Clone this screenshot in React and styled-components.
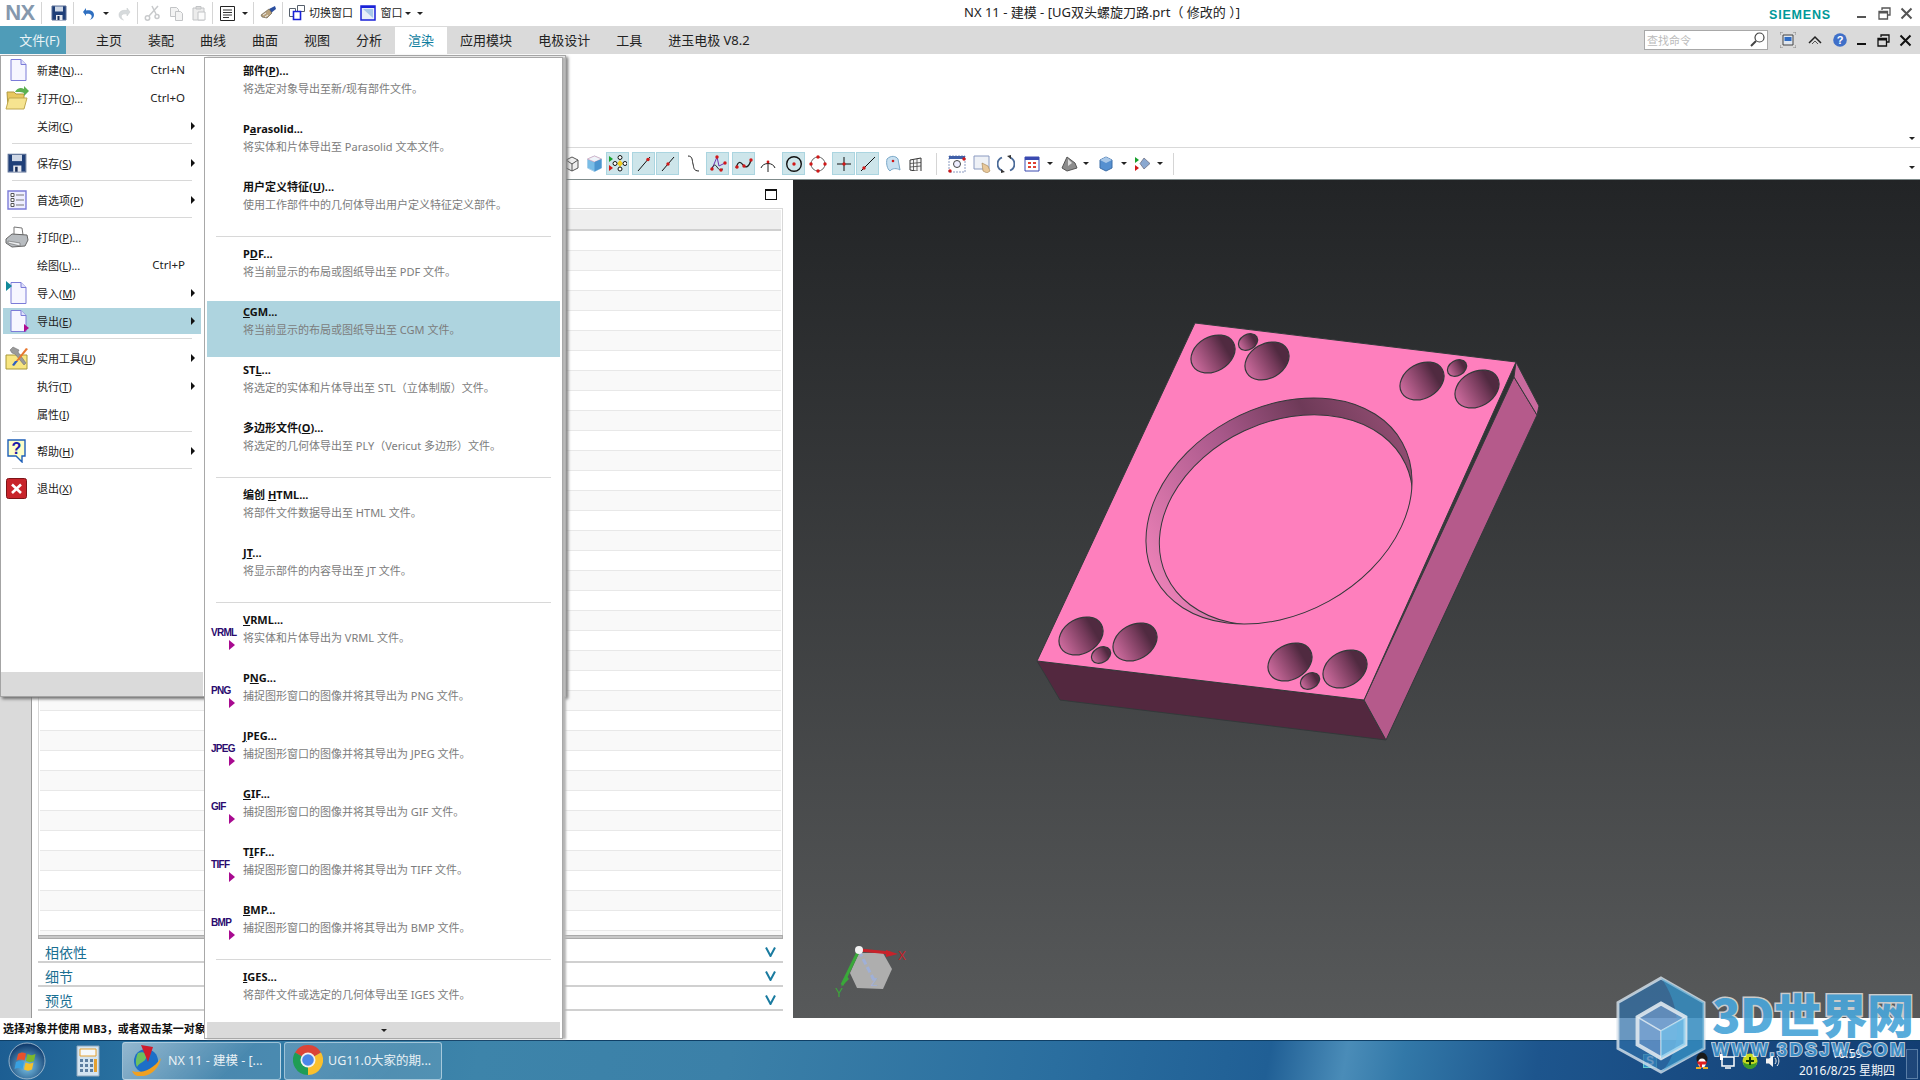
import React from 'react';
import styled, { createGlobalStyle } from 'styled-components';

const FONT = '"Noto Sans", "Noto Sans CJK SC", sans-serif';

const Global = createGlobalStyle`
  html, body { margin: 0; padding: 0; background: #fff; overflow: hidden; }
  * { box-sizing: border-box; }
  u { text-underline-offset: 1px; }
`;

const Screen = styled.div`
  position: relative; width: 1920px; height: 1080px; overflow: hidden;
  display: flex; flex-direction: column; font-family: ${FONT}; color: #222;
`;

/* generic row placing of drawn items by their centre line */
const Row = styled.div`display: flex; height: 100%; flex-shrink: 0;`;
const Slot = styled.div`
  width: ${p => p.$w}px; margin-left: ${p => p.$ml}px; flex-shrink: 0;
  display: flex; align-items: center; justify-content: center; white-space: nowrap;
`;
const Placed = ({ items, start = 0 }) => {
  let right = start;
  return (
    <Row>
      {items.map((it, i) => {
        const left = it.c - it.w / 2;
        const ml = left - right;
        right = left + it.w;
        return <Slot key={i} $w={it.w} $ml={ml}>{it.n}</Slot>;
      })}
    </Row>
  );
};

const Caret = styled.i`
  display: block; width: 0; height: 0;
  border-left: ${p => p.$s || 3.5}px solid transparent;
  border-right: ${p => p.$s || 3.5}px solid transparent;
  border-top: ${p => p.$s || 3.5}px solid #222;
`;
const VSep = styled.i`display: block; width: 1px; height: 22px; background: #d5d5d5;`;
const ArrowR = styled.i`
  display: block; width: 0; height: 0;
  border-top: 4px solid transparent; border-bottom: 4px solid transparent; border-left: 4px solid #111;
`;

const S = ({ w = 16, h, vb, children }) => (
  <svg width={w} height={h || w} viewBox={vb || `0 0 ${w} ${h || w}`} style={{ display: 'block', flexShrink: 0 }}>{children}</svg>
);

/* ---------- quick access icons ---------- */
const Floppy = ({ w = 16 }) => (
  <S w={w} vb="0 0 16 16">
    <path d="M1 1h14v14H1z" fill="#1f3f78" stroke="#5a6f96" />
    <path d="M4 1.500h8v5H4z" fill="#cfd8e6" />
    <path d="M5 10h6.500v5H5z" fill="#e7e9ee" /><path d="M6.500 11h2v4h-2z" fill="#152a55" />
  </S>
);
const Undo = () => (
  <S w={15}><path d="M2 6l3-4v2.500c5-.8 8 1 8 4.500 0 2.500-2 4.500-4.500 5 2-1.500 2.500-3 2-4.500-.7-1.500-3-2-5.500-1.500V10z" fill="#2f6fc0" /></S>
);
const Redo = () => (
  <S w={15}><path d="M13 6l-3-4v2.500c-5-.8-8 1-8 4.500 0 2.500 2 4.500 4.500 5-2-1.500-2.500-3-2-4.500.7-1.500 3-2 5.500-1.500V10z" fill="#d6dadc" stroke="#c4c8ca" strokeWidth=".5" /></S>
);
const Cut = () => (
  <S w={16}><g stroke="#c8cacc" fill="none" strokeWidth="1.500"><path d="M14 1L5 11M8 1l4 8" /><circle cx="3.500" cy="13" r="2.200" /><circle cx="13" cy="11.500" r="2" /></g></S>
);
const Copy = () => (
  <S w={15}><g fill="#f3f3f3" stroke="#c2c4c6"><path d="M1.500 1.500h6l2 2v7h-8z" /><path d="M6.500 5.500h5l2 2v7h-7z" /></g></S>
);
const Paste = () => (
  <S w={16}><g stroke="#c2c4c6"><path d="M2 3h11v12H2z" fill="#ececec" /><path d="M5 1.500h5V4H5z" fill="#ddd" /><path d="M7 7h7v8H7z" fill="#fbfbfb" /></g></S>
);
const DocLines = () => (
  <S w={15}><path d="M.5.5h14v14H.5z" fill="#fff" stroke="#222" /><path d="M3 4h9M3 6.500h9M3 9h9M3 11.500h6" stroke="#333" /></S>
);
const Brush = () => (
  <S w={18}><path d="M10 5l6-3 1 3-5 4z" fill="#2b4fa0" /><path d="M2 11l8-6 3 4-5 5-5-1z" fill="#b9a27c" stroke="#5b5444" strokeWidth=".6" /><path d="M4 11l3-2M6 13l3-2" stroke="#eee" /></S>
);
const SwitchWin = () => (
  <S w={16}><g fill="#fff" stroke="#56606c"><path d="M.5 3.500h6v8h-6z" /><path d="M8.500.5h7v6h-7z" /></g><path d="M4.500 6.500h7v8h-7z" fill="#fff" stroke="#1a22d8" strokeWidth="1.600" /></S>
);
const WinBlue = () => (
  <S w={16}><path d="M1 1h14v14H1z" fill="#e8eff8" stroke="#1a22d8" strokeWidth="1.500" /><path d="M1 1h14v2H1z" fill="#1a22d8" /><path d="M3 4h10v9z" fill="#a8c8e8" /></S>
);

/* ---------- title + menu bar ---------- */
const TitleBar = styled.div`height: 26px; display: flex; background: #fff; flex-shrink: 0;`;
const NxLogo = styled.span`font: bold 22px/26px "Liberation Sans", sans-serif; color: #8598ad; letter-spacing: -.5px;`;
const QuickText = styled.span`font-size: 11px; color: #222; margin-top: -2px;`;
const TitleText = styled.div`
  margin-left: 540px; font-size: 13px; line-height: 24px; color: #222; white-space: nowrap;
`;
const RightGroup = styled.div`margin-left: auto; width: ${p => p.$w}px; height: 100%; flex-shrink: 0;`;
const Siemens = styled.span`font: bold 12.500px "Liberation Sans", sans-serif; color: #009999; letter-spacing: .8px; margin-top: 3px;`;

const Minim = ({ c = '#555' }) => <S w={9} h={12}><path d="M0 9h9v2H0z" fill={c} /></S>;
const Restore = ({ c = '#555' }) => (
  <S w={13}><g fill="none" stroke={c} strokeWidth="1.300"><path d="M4 3V1h8v7h-2.500" /><path d="M1 4.500h8.500V12H1z" /><path d="M1 5.500h8.500" strokeWidth="2" /></g></S>
);
const CloseX = ({ c = '#555' }) => <S w={13}><path d="M1.500 1.500l10 10M11.500 1.500l-10 10" stroke={c} strokeWidth="2" /></S>;

const MenuBar = styled.div`height: 28px; background: #dadada; display: flex; flex-shrink: 0;`;
const FileTab = styled.div`
  width: 66px; background: #4f9cb8; color: #e9f3f6; font-size: 13px; padding: 0 0 2px 13px;
  display: flex; align-items: center; justify-content: center;
`;
const Tabs = styled.div`display: flex; margin-left: 17px; padding-top: 1px;`;
const Tab = styled.div`
  padding: 0 13px 2px; font-size: 13px; display: flex; align-items: center; white-space: nowrap;
  color: ${p => (p.$on ? '#0f7ea0' : '#222')}; background: ${p => (p.$on ? '#fff' : 'transparent')};
`;
const SearchBox = styled.div`
  width: 124px; height: 20px; background: #fff; border: 1px solid #a8a8a8; padding: 0 2px 1px;
  display: flex; align-items: center; justify-content: space-between; font-size: 11px; color: #bbb;
`;

const Ribbon = styled.div`
  height: 94px; background: #fff; border-bottom: 1px solid #d9d9d9; flex-shrink: 0;
  display: flex; justify-content: flex-end; align-items: flex-end; padding: 0 5px 7px 0;
`;
const ToolBar = styled.div`
  height: 32px; background: #fff; border-bottom: 1px solid #7f8b8b; flex-shrink: 0; display: flex;
`;
const ToolBtn = styled.div`
  width: 23px; height: 23px; display: flex; align-items: center; justify-content: center;
  background: ${p => (p.$on ? '#cde5ea' : 'transparent')};
  border: 1px solid ${p => (p.$on ? '#abd5e0' : 'transparent')};
`;
const ToolEnd = styled.div`margin-left: auto; padding: 18px 5px 0 0;`;

/* toolbar drawings */
const R = ({ x, y, r = 1.700 }) => <circle cx={x} cy={y} r={r} fill="#d01818" />;
const TB = {
  gray: <S w={16}><path d="M8 1l6 3v8l-6 3-6-3V4z" fill="#eee" stroke="#555" /><path d="M8 8l6-4M8 8v7M8 8L2 4" stroke="#555" fill="none" /></S>,
  blue: <S w={17}><path d="M8.500 1l7 3v9l-7 3.500-7-3.500V4z" fill="#79bde6" stroke="#a9d0ea" /><path d="M1.500 4l7 3 7-3-7-3z" fill="#eef4fa" stroke="#e08aa0" strokeWidth=".5" /><path d="M8.500 7v9.500l7-3.500V4z" fill="#4c96cf" /></S>,
  dots: <S w={19}><path d="M1 2l4 3-4 3z" fill="#17a02c" /><path d="M1 11l4 3-4 3z" fill="#d01818" /><path d="M12 6l3 3.500-3 3.500-3-3.500z" fill="#f2cf20" /><g fill="#fff" stroke="#111"><circle cx="12" cy="3.500" r="2" /><circle cx="12" cy="15" r="2" /><circle cx="7" cy="9.500" r="2" /><circle cx="17" cy="9.500" r="2" /></g></S>,
  line1: <S w={18}><path d="M3 16L15 2" stroke="#111" /><R x="13" y="4.500" /></S>,
  line2: <S w={18}><path d="M3 16L15 2" stroke="#111" /><R x="9" y="9" /></S>,
  curve: <S w={17}><path d="M3 1c5 0 4 5 5 8s0 7 6 7" stroke="#222" fill="none" /></S>,
  poly: <S w={20}><path d="M4 15L9 3l2 9 6-3" stroke="#7030b0" fill="none" /><path d="M3 16c3-6 4-6 6-3s3 3 6 2" stroke="#222" fill="none" /><R x="9" y="3" /><R x="4" y="15" /><R x="13" y="16" /><R x="17" y="9" /></S>,
  wave: <S w={20}><path d="M2 14c3-10 6-4 8-2s5 1 7-6" stroke="#222" fill="none" strokeWidth="1.300" /><R x="3" y="13" /><R x="10" y="12" /><R x="17" y="6" /></S>,
  arc: <S w={16}><path d="M1 12c2-6 12-6 14 0M8 6v10" stroke="#222" fill="none" /><R x="8" y="6" r="1.400" /></S>,
  circ: <S w={18}><circle cx="9" cy="9" r="7.300" fill="none" stroke="#111" strokeWidth="1.400" /><R x="9" y="9" /></S>,
  circ4: <S w={18}><circle cx="9" cy="9" r="7" fill="none" stroke="#666" /><R x="9" y="2" /><R x="2" y="9" /><R x="16" y="9" /><R x="9" y="16" /></S>,
  cross: <S w={18}><path d="M9 2v14M2 9h14" stroke="#111" /><R x="9" y="9" /></S>,
  line3: <S w={18}><path d="M2 16L16 2" stroke="#111" /><R x="5" y="13" /></S>,
  page: <S w={18}><path d="M3 4c4-4 9-3 11 0l2 11c-3-2-8-2-10 1-3-2-4-8-3-12z" fill="#c8e0f0" stroke="#7aa8c8" /><R x="9" y="6" r="1.300" /></S>,
  grid: <S w={14}><path d="M1 3l11-2v14L1 13z" fill="#f5f5f5" stroke="#333" /><path d="M1 6.500l11-1M1 10l11-1M4.500 2.500v11.500M8 2v12.500" stroke="#444" strokeWidth=".8" /></S>,
  fit: <S w={18}><path d="M1 1h16v16H1z" fill="#fff" stroke="#8a9ac0" strokeDasharray="2 1" /><path d="M1 1h16v3H1z" fill="#4060a8" /><circle cx="9" cy="9" r="3.500" fill="#eef" stroke="#444" /><R x="2" y="16" /><R x="16" y="4" /></S>,
  pan: <S w={18}><path d="M1 1h15v13H1z" fill="#eef1f6" stroke="#8a9ac0" /><path d="M9 8l6 3 2 5-3 2-4-2z" fill="#e8c89a" stroke="#a08050" strokeWidth=".6" /></S>,
  spin: <S w={18}><path d="M13 2.500a7 7 0 0 1 0 13M5 15.500a7 7 0 0 1 0-13" fill="none" stroke="#4a6a98" strokeWidth="1.800" /><path d="M10 1l4-1v4zM8 17l-4 1v-4z" fill="#333" /></S>,
  frame: <S w={16}><path d="M1 1h14v14H1z" fill="#fff" stroke="#3a4ab0" /><path d="M1 1h14v3H1z" fill="#3a4ab0" /><g fill="#e04030"><path d="M4 6h3v2H4zM9 6h3v2H9zM4 10h3v2H4zM9 10h3v2H9z" /></g></S>,
  shade: <S w={17}><path d="M6 2l8 6 2 5-10 3-5-3z" fill="#8c8c8c" stroke="#555" /><path d="M7 4l4 4-4 3z" fill="#ddd" /></S>,
  box: <S w={16}><path d="M8 1l6 3v8l-6 3-6-3V4z" fill="#5590d0" stroke="#3c6ea8" /><path d="M2 4l6 3 6-3-6-3z" fill="#a9c8e8" /></S>,
  view: <S w={17}><path d="M1 2l4 3-4 3z" fill="#17a02c" /><path d="M1 10l4 3-4 3z" fill="#d01818" /><path d="M10 3l6 5.500-6 5.500-4-5.500z" fill="#8aa8d0" stroke="#556" strokeWidth=".6" /></S>,
};

/* ---------- left panel ---------- */
const Workspace = styled.div`height: 838px; display: flex; flex-shrink: 0;`;
const Panel = styled.div`width: 793px; display: flex; background: #fff; flex-shrink: 0;`;
const Gutter = styled.div`width: 32px; background: #dadada; border-right: 1px solid #999;`;
const PanelBody = styled.div`flex: 1; display: flex; flex-direction: column; padding: 0 10px 6px 6px;`;
const PanelHead = styled.div`height: 28px; display: flex; justify-content: flex-end; align-items: center; padding-right: 6px;`;
const MaxBtn = styled.i`display: block; width: 12px; height: 11px; border: 1px solid #111; border-top-width: 2px;`;
const List = styled.div`
  height: 727px; overflow: hidden; border: 1px solid #d8d8d8; border-bottom: none; padding: 1px 1px 0;
`;
const ListHead = styled.div`height: 21px; background: #efefef; border-bottom: 2px solid #d0d0d0;`;
const ListRow = styled.div`
  height: 20px; border-bottom: 1px solid #e8e8e8;
  background: ${p => (p.$alt ? '#f9f9f9' : '#fff')};
`;
const ListEnd = styled.div`height: 4px; background: #c8c8c8; border: 1px solid #aaa;`;
const Section = styled.div`
  height: 24px; border-bottom: 2px solid #d0d0d0; padding: 3px 7px 0;
  display: flex; align-items: center; justify-content: space-between;
  font-size: 14px; color: #1a6f92;
`;
const Chev = () => <S w={11} h={10}><path d="M1 .5L5.500 9 10 .5" stroke="#1a7ba0" strokeWidth="2" fill="none" /></S>;

const Viewport = styled.div`
  flex: 1; background: linear-gradient(#222426, #57595a);
`;

/* ---------- status and taskbar ---------- */
const StatusBar = styled.div`
  height: 22px; background: #fff; font-size: 11px; font-weight: 700; color: #111;
  display: flex; align-items: center; padding: 0 0 2px 3px; white-space: nowrap; flex-shrink: 0;
`;
const Taskbar = styled.div`
  height: 40px; flex-shrink: 0; border-top: 1px solid #0f3f66;
  background: linear-gradient(100deg, #1c5d92 0, #2b74a2 8%, #3d84aa 25%, #3b80a8 38%, #2a6e9f 55%, #205f95 66%, #4a8cb8 70%, #3278a8 73%, #1d558d 80%, #123d72 100%);
`;
const TaskBtn = styled.div`
  width: 100%; height: 38px; border: 1px solid rgba(225, 240, 248, .55); border-radius: 3px;
  background: linear-gradient(135deg, ${p => (p.$hi ? 'rgba(255,255,255,.5)' : 'rgba(255,255,255,.2)')}, rgba(255,255,255,.12) 70%);
  display: flex; align-items: center; gap: 5px; padding: 0 0 2px 8px;
  color: #e9f1f5; font-size: 12.500px;
`;
const Clock = styled.div`
  display: flex; flex-direction: column; align-items: center; color: #f2f6fa; font-size: 12px; line-height: 17px;
  padding-top: 3px;
`;
const ShowDesk = styled.i`
  display: block; width: 100%; height: 30px; margin-top: 6px;
  border: 1px solid rgba(180, 210, 235, .4); background: rgba(255, 255, 255, .05);
`;
const Sogou = styled.span`
  font: bold 12px "Liberation Sans", sans-serif; color: #fff; background: #2a8fc8;
  border: 1px solid #6cc; width: 14px; height: 14px; display: flex; align-items: center; justify-content: center;
`;

const Orb = () => (
  <S w={38} vb="0 0 38 38">
    <defs><radialGradient id="orb" cx=".5" cy=".65" r=".6"><stop offset="0" stopColor="#7cc6ea" /><stop offset="1" stopColor="#123e70" /></radialGradient></defs>
    <circle cx="19" cy="19" r="18" fill="url(#orb)" stroke="#c8d8e4" strokeOpacity=".7" />
    <path d="M10 12c3-2 5-2 8-.5l-1.500 7c-3-1.500-5-1.500-8 0z" fill="#e8512c" />
    <path d="M19.500 12c3 1.500 5 1.500 8 0l-1.500 7c-3 1.500-5 1.500-8 0z" fill="#7cb82c" />
    <path d="M8 20c3-1.500 5-1.500 8 0l-1.500 7c-3-1.500-5-1.500-8 0z" fill="#38a0e0" />
    <path d="M17.500 20.500c3 1.500 5 1.500 8 0L24 27.500c-3 1.500-5 1.500-8 0z" fill="#f6c02c" />
  </S>
);
const Calc = () => (
  <S w={24} h={32} vb="0 0 24 32">
    <path d="M1 1h22v30H1z" fill="#d4e4f0" stroke="#8ea8bc" />
    <path d="M4 4h16v7H4z" fill="#f4f8fb" stroke="#e4a030" />
    <g fill="#5c7ea0"><path d="M4 14h3v3H4zM9 14h3v3H9zM14 14h3v3h-3zM4 19h3v3H4zM9 19h3v3H9zM14 19h3v3h-3zM4 24h3v3H4zM9 24h3v3H9zM14 24h3v3h-3z" /></g>
    <path d="M18 14h3v13h-3z" fill="#e4a030" />
  </S>
);
const NxApp = () => (
  <S w={32} h={32} vb="0 0 32 32">
    <circle cx="15" cy="17" r="12" fill="#1d6fc8" />
    <path d="M7 9c6-2 9 1 8 5s-6 4-9 9c-2-4-1-10 1-14z" fill="#6cc060" />
    <path d="M10 1l12 2-5 15z" fill="#d01c2c" />
    <path d="M1 27c8 3 20 0 29-13-2 12-13 20-24 18-2-.5-4-2.500-5-5z" fill="#f0a020" />
  </S>
);
const Chrome = () => (
  <S w={30}>
    <path d="M15 15L2 7.500A15 15 0 0 1 28 7.500z" fill="#db4437" />
    <path d="M15 15l13-7.500A15 15 0 0 1 15 30z" fill="#fbc02d" />
    <path d="M15 15V30A15 15 0 0 1 2 7.500z" fill="#1f9d55" />
    <circle cx="15" cy="15" r="7.500" fill="#f2f2f2" /><circle cx="15" cy="15" r="5.800" fill="#4a86e8" />
  </S>
);
const QQ = () => (
  <S w={16} h={18} vb="0 0 16 18">
    <ellipse cx="8" cy="7" rx="5.500" ry="6.500" fill="#1a1a1a" /><ellipse cx="8" cy="11" rx="4" ry="4.500" fill="#fff" />
    <path d="M3 9.500h10l-1 3H8v3H5.500v-3H4z" fill="#e02020" /><path d="M2 15h5v2H2zM9 15h5v2H9z" fill="#f0b020" />
  </S>
);
const Net = () => (
  <S w={16}><path d="M3 4h12v9H3zM6 15h6" fill="none" stroke="#fff" strokeWidth="1.500" /><path d="M1 1h3v6H1z" fill="#fff" /></S>
);
const Three60 = () => (
  <S w={16}><circle cx="8" cy="8" r="7.500" fill="#c8d820" /><path d="M1 9a7 7 0 0 0 14 0c-3 3-10 3-14 0z" fill="#3c9c28" /><path d="M7 4h2v3h3v2H9v3H7V9H4V7h3z" fill="#103808" /></S>
);
const Vol = () => (
  <S w={16}><path d="M1 5.500h3L8 2v12L4 10.500H1z" fill="#f4f4f4" /><path d="M10 5c1.500 2 1.500 4 0 6M12 3c2.500 3 2.500 7 0 10" stroke="#eee" fill="none" /></S>
);

/* ---------- menus ---------- */
const MainMenu = styled.div`
  position: absolute; left: 0; top: 55px; width: 566px; height: 642px; z-index: 5;
  background: #fff; border: 1px solid #a4a4a4; box-shadow: 2px 2px 3px #6f6f6f;
  display: flex;
`;
const MainCol = styled.div`
  width: 202px; display: flex; flex-direction: column; height: 100%;
`;
const MainItems = styled.div`flex: 1; padding: 0 2px;`;
const MainFoot = styled.div`height: 24px; background: #dadada;`;
const Item = styled.div`
  height: 28px; display: flex; align-items: center; font-size: 11px; color: #222;
  background: ${p => (p.$on ? 'linear-gradient(transparent 1px, #aed4df 1px, #aed4df 27px, transparent 27px)' : 'transparent')};
`;
const ItemIcon = styled.div`width: 34px; flex-shrink: 0; display: flex; justify-content: center; padding-right: 7px;`;
const ItemLabel = styled.div`flex: 1; white-space: nowrap; margin-top: -1px;`;
const Shortcut = styled.div`font-size: 11.500px; margin-top: -1px;`;
const ItemArrow = styled.div`width: 16px; flex-shrink: 0; display: flex; justify-content: center;`;
const MenuSep = styled.div`height: 1px; margin: 3px 9px 5px; background: #d8d8d8;`;

const SubMenu = styled.div`
  position: absolute; left: 204px; top: 57px; width: 359px; height: 982px; z-index: 6;
  background: #fff; border: 1px solid #a8a8a8; box-shadow: 3px 0 2px #b4b4b4;
  display: flex; flex-direction: column; padding: 0 2px;
`;
const SubItem = styled.div`
  height: 58px; display: grid; grid-template-columns: 36px 1fr; flex-shrink: 0;
  background: ${p => (p.$on ? 'linear-gradient(transparent 2px, #aed4df 2px)' : 'transparent')};
`;
const SubIcon = styled.div`
  display: flex; flex-direction: column; align-items: flex-start; padding: 19px 0 0 4px;
`;
const SubFmt = styled.span`
  font: 700 10px/13px "Liberation Sans", sans-serif; color: #2a0a6e; letter-spacing: -.7px;
`;
const SubTri = styled.i`
  display: block; margin: 1px 0 0 18px; width: 0; height: 0;
  border-top: 5.500px solid transparent; border-bottom: 5.500px solid transparent; border-left: 6px solid #a80a90;
`;
const SubText = styled.div`padding-top: 6px;`;
const SubTitle = styled.div`font-size: 11px; line-height: 14px; font-weight: 700; color: #111; white-space: nowrap;`;
const SubDesc = styled.div`font-size: 11px; line-height: 14px; margin-top: 4px; color: #7c7c7c; white-space: nowrap;`;
const SubSep = styled.div`height: 1px; margin: 4px 9px 4px; background: #d8d8d8; flex-shrink: 0;`;
const SubFoot = styled.div`
  margin-top: auto; margin-bottom: 1px; height: 16px; background: #dadada; flex-shrink: 0;
  display: flex; align-items: center; justify-content: center;
`;

const Page = ({ badge }) => (
  <S w={24} vb="0 0 24 24">
    <path d="M6 1.500h10l5 5v16H6z" fill="#f6f6ff" stroke="#7c7cd8" />
    <path d="M16 1.500v5h5" fill="#dfe0fa" stroke="#7c7cd8" />
    {badge === 'in' && <path d="M1 0l6 5-6 5z" fill="#128a9a" />}
    {badge === 'out' && <path d="M19 15l5 4-5 4z" fill="#b00a90" />}
  </S>
);
const Folder = () => (
  <S w={24} vb="0 0 24 24">
    <path d="M2 6h7l2 2h8v14H3z" fill="#e8c860" stroke="#b09a40" />
    <path d="M1 23l3-11h18l-3 11z" fill="#f6e490" stroke="#c0a850" />
    <path d="M10 6c2-4 6-5 9-3V0l5 5-5 5V7c-3-1.500-6-1-9-1z" fill="#5cb050" />
  </S>
);
const ListIco = () => (
  <S w={20} vb="0 0 20 20">
    <path d="M1 1h18v18H1z" fill="#eef" stroke="#7c7cd8" strokeWidth="1.400" />
    <g fill="#fff" stroke="#555"><path d="M4 3.500h3v3H4zM4 8.500h3v3H4zM4 13.500h3v3H4z" /></g>
    <path d="M9 5h8M9 10h8M9 15h8" stroke="#777" />
  </S>
);
const Printer = () => (
  <S w={24} vb="0 0 24 24">
    <path d="M9 10V2l8 1 1 7z" fill="#fff" stroke="#777" />
    <path d="M1 14l6-5 15 1 1 5-3 6-13 1-6-4z" fill="#b8bcc0" stroke="#666" />
    <path d="M3 16l12 2v3L3 18z" fill="#eceef0" stroke="#666" strokeWidth=".6" />
  </S>
);
const ToolsIco = () => (
  <S w={24} vb="0 0 24 24">
    <path d="M1 9h21v14H1z" fill="#f8e680" stroke="#a89838" />
    <path d="M8 1l6 3-1 2 8 11-2 2L10 8 7 7 5 4z" fill="#9a9a9a" stroke="#666" strokeWidth=".5" />
    <path d="M21 2l2 1-10 12-3 1z" fill="#e87830" />
    <path d="M13 15l-4 5-2-1 3-4z" fill="#3060c0" />
  </S>
);
const HelpIco = () => (
  <S w={20} h={24} vb="0 0 20 24">
    <path d="M1 1h17v16h-3v6l-6-6H1z" fill="#fdfdc8" stroke="#1e5fb8" strokeWidth="1.400" />
    <text x="9.500" y="14.500" textAnchor="middle" fontFamily="Liberation Sans" fontWeight="700" fontSize="16" fill="#1a1aa8">?</text>
  </S>
);
const ExitIco = () => (
  <S w={21} vb="0 0 21 21">
    <rect x=".5" y=".5" width="20" height="20" rx="2" fill="#c8242a" stroke="#7c1418" />
    <path d="M6 6.500l9 8.500M15 6.500L6 15" stroke="#fff" strokeWidth="2.600" />
  </S>
);

const mainMenu = [
  { l: '新建', k: 'N', d: '...', s: 'Ctrl+N', i: <Page /> },
  { l: '打开', k: 'O', d: '...', s: 'Ctrl+O', i: <Folder /> },
  { l: '关闭', k: 'C', a: 1 },
  { sep: 1 },
  { l: '保存', k: 'S', a: 1, i: <Floppy w={20} /> },
  { sep: 1 },
  { l: '首选项', k: 'P', a: 1, i: <ListIco /> },
  { sep: 1 },
  { l: '打印', k: 'P', d: '...', i: <Printer /> },
  { l: '绘图', k: 'L', d: '...', s: 'Ctrl+P' },
  { l: '导入', k: 'M', a: 1, i: <Page badge="in" /> },
  { l: '导出', k: 'E', a: 1, on: 1, i: <Page badge="out" /> },
  { sep: 1 },
  { l: '实用工具', k: 'U', a: 1, i: <ToolsIco /> },
  { l: '执行', k: 'T', a: 1 },
  { l: '属性', k: 'I' },
  { sep: 1 },
  { l: '帮助', k: 'H', a: 1, i: <HelpIco /> },
  { sep: 1 },
  { l: '退出', k: 'X', i: <ExitIco /> },
];

const subMenu = [
  { t: <>部件(<u>P</u>)...</>, d: '将选定对象导出至新/现有部件文件。' },
  { t: <>P<u>a</u>rasolid...</>, d: '将实体和片体导出至 Parasolid 文本文件。' },
  { t: <>用户定义特征(<u>U</u>)...</>, d: '使用工作部件中的几何体导出用户定义特征定义部件。' },
  { sep: 1 },
  { t: <>P<u>D</u>F...</>, d: '将当前显示的布局或图纸导出至 PDF 文件。' },
  { t: <><u>C</u>GM...</>, d: '将当前显示的布局或图纸导出至 CGM 文件。', on: 1 },
  { t: <>ST<u>L</u>...</>, d: '将选定的实体和片体导出至 STL（立体制版）文件。' },
  { t: <>多边形文件(<u>O</u>)...</>, d: '将选定的几何体导出至 PLY（Vericut 多边形）文件。' },
  { sep: 1 },
  { t: <>编创 <u>H</u>TML...</>, d: '将部件文件数据导出至 HTML 文件。' },
  { t: <>J<u>T</u>...</>, d: '将显示部件的内容导出至 JT 文件。' },
  { sep: 1 },
  { t: <><u>V</u>RML...</>, d: '将实体和片体导出为 VRML 文件。', f: 'VRML' },
  { t: <>P<u>N</u>G...</>, d: '捕捉图形窗口的图像并将其导出为 PNG 文件。', f: 'PNG' },
  { t: <><u>J</u>PEG...</>, d: '捕捉图形窗口的图像并将其导出为 JPEG 文件。', f: 'JPEG' },
  { t: <><u>G</u>IF...</>, d: '捕捉图形窗口的图像并将其导出为 GIF 文件。', f: 'GIF' },
  { t: <>T<u>I</u>FF...</>, d: '捕捉图形窗口的图像并将其导出为 TIFF 文件。', f: 'TIFF' },
  { t: <><u>B</u>MP...</>, d: '捕捉图形窗口的图像并将其导出为 BMP 文件。', f: 'BMP' },
  { sep: 1 },
  { t: <><u>I</u>GES...</>, d: '将部件文件或选定的几何体导出至 IGES 文件。' },
];

const quick = [
  { c: 20, w: 34, n: <NxLogo>NX</NxLogo> },
  { c: 41, w: 1, n: <VSep /> },
  { c: 59, w: 16, n: <Floppy /> },
  { c: 73, w: 1, n: <VSep /> },
  { c: 88, w: 15, n: <Undo /> },
  { c: 106, w: 8, n: <Caret /> },
  { c: 124, w: 15, n: <Redo /> },
  { c: 137, w: 1, n: <VSep /> },
  { c: 152, w: 16, n: <Cut /> },
  { c: 176, w: 15, n: <Copy /> },
  { c: 199, w: 16, n: <Paste /> },
  { c: 212, w: 1, n: <VSep /> },
  { c: 227, w: 15, n: <DocLines /> },
  { c: 245, w: 8, n: <Caret /> },
  { c: 253, w: 1, n: <VSep /> },
  { c: 268, w: 18, n: <Brush /> },
  { c: 282, w: 1, n: <VSep /> },
  { c: 297, w: 16, n: <SwitchWin /> },
  { c: 331, w: 44, n: <QuickText>切换窗口</QuickText> },
  { c: 367.500, w: 16, n: <WinBlue /> },
  { c: 391.500, w: 24, n: <QuickText>窗口</QuickText> },
  { c: 408, w: 8, n: <Caret /> },
  { c: 420, w: 8, n: <Caret /> },
];

const tb = (c, k, on) => ({ c, w: 23, n: <ToolBtn $on={on}>{TB[k]}</ToolBtn> });
const tools = [
  tb(572, 'gray'), tb(594, 'blue'), tb(617.500, 'dots', 1), tb(643.500, 'line1', 1), tb(667.500, 'line2', 1),
  tb(693, 'curve'), tb(717.500, 'poly', 1), tb(743.500, 'wave', 1), tb(767.500, 'arc'), tb(793.500, 'circ', 1),
  tb(817.500, 'circ4'), tb(843.500, 'cross', 1), tb(867.500, 'line3', 1), tb(892.500, 'page'), tb(916, 'grid'),
  { c: 936, w: 1, n: <VSep /> },
  tb(956.500, 'fit'), tb(981.500, 'pan'), tb(1005.500, 'spin'), tb(1032, 'frame'),
  { c: 1050, w: 7, n: <Caret /> }, tb(1069, 'shade'),
  { c: 1086, w: 7, n: <Caret /> }, tb(1106, 'box'),
  { c: 1124, w: 7, n: <Caret /> }, tb(1142, 'view'),
  { c: 1160, w: 7, n: <Caret /> },
  { c: 1173, w: 1, n: <VSep /> },
];

const Mag = () => (
  <S w={15}><circle cx="9.500" cy="5.500" r="4.500" fill="#fff" stroke="#444" strokeWidth="1.200" /><path d="M6 9l-5 5" stroke="#444" strokeWidth="2" /></S>
);
const WinFrame = () => (
  <S w={16}><path d="M0 3V0h3M13 0h3v3M16 13v3h-3M3 16H0v-3" stroke="#888" fill="none" /><path d="M3 3h10v10H3z" fill="#dfe6ef" stroke="#444" /><path d="M4.500 5h7v4h-7z" fill="#2f6cc4" /></S>
);
const UpChev = () => <S w={14} h={10}><path d="M1 8l6-6 6 6" fill="none" stroke="#222" strokeWidth="1.500" /><path d="M4 9l3-3 3 3" fill="none" stroke="#555" /></S>;
const HelpBlue = () => (
  <S w={14}><circle cx="7" cy="7" r="6.800" fill="#3f6fc8" /><text x="7" y="11" textAnchor="middle" fontFamily="Liberation Sans" fontWeight="700" fontSize="11" fill="#fff">?</text></S>
);

const titleRight = [
  { c: 1800, w: 64, n: <Siemens>SIEMENS</Siemens> },
  { c: 1861, w: 9, n: <Minim /> },
  { c: 1884, w: 13, n: <Restore /> },
  { c: 1906, w: 13, n: <CloseX /> },
];
const menuRight = [
  { c: 1706, w: 124, n: <SearchBox>查找命令<Mag /></SearchBox> },
  { c: 1788, w: 16, n: <WinFrame /> },
  { c: 1814.500, w: 14, n: <UpChev /> },
  { c: 1840, w: 14, n: <HelpBlue /> },
  { c: 1861, w: 9, n: <Minim c="#111" /> },
  { c: 1883, w: 13, n: <Restore c="#111" /> },
  { c: 1905, w: 13, n: <CloseX c="#111" /> },
];
const task = [
  { c: 27, w: 40, n: <Orb /> },
  { c: 88, w: 24, n: <Calc /> },
  { c: 201.500, w: 159, n: <TaskBtn $hi><NxApp />NX 11 - 建模 - [...</TaskBtn> },
  { c: 363, w: 158, n: <TaskBtn><Chrome />UG11.0大家的期...</TaskBtn> },
  { c: 1650, w: 14, n: <Sogou>S</Sogou> },
  { c: 1702, w: 16, n: <QQ /> },
  { c: 1727, w: 16, n: <Net /> },
  { c: 1750, w: 16, n: <Three60 /> },
  { c: 1773, w: 16, n: <Vol /> },
  { c: 1847, w: 110, n: <Clock><span>16:59</span><span>2016/8/25 星期四</span></Clock> },
  { c: 1912, w: 12, n: <ShowDesk /> },
];

/* ---------- 3D part ---------- */
const HOLES = [
  [1213, 354, 1], [1267, 361, 1], [1248, 342, 0],
  [1422, 381, 1], [1477, 389, 1], [1457, 368, 0],
  [1081, 636, 1], [1135, 642, 1], [1101, 655, 0],
  [1290, 662, 1], [1345, 669, 1], [1310, 681, 0],
];
const EDGE = '#33393a';
const Part = () => (
  <svg width="1127" height="838" viewBox="793 180 1127 838" style={{ display: 'block' }}>
    <defs>
      <linearGradient id="hole" x1="0" y1="0" x2="1" y2="0">
        <stop offset="0" stopColor="#cf6c9f" /><stop offset=".6" stopColor="#743a5a" /><stop offset=".8" stopColor="#502a40" /><stop offset="1" stopColor="#502a40" />
      </linearGradient>
      <linearGradient id="wall" x1="0" y1="0" x2="1" y2="0">
        <stop offset="0" stopColor="#ea80b6" /><stop offset=".45" stopColor="#a8588a" /><stop offset=".75" stopColor="#6e3a58" /><stop offset="1" stopColor="#8f4c70" />
      </linearGradient>
      <clipPath id="pocket"><ellipse cx="1279" cy="511" rx="141" ry="103" transform="rotate(-29 1279 511)" /></clipPath>
    </defs>
    <polygon points="1037,661 1364,700 1386,740 1060,700" fill="#53283f" stroke={EDGE} />
    <polygon points="1364,700 1514,377 1537,415 1386,740" fill="#b55a8b" stroke={EDGE} />
    <polygon points="1516,362 1539,406 1537,415 1514,377" fill="#c96a9e" stroke={EDGE} />
    <polygon points="1195,323 1516,362 1364,700 1037,661" fill="#fe7fbd" stroke={EDGE} />
    <ellipse cx="1279" cy="511" rx="141" ry="103" transform="rotate(-29 1279 511)" fill="url(#wall)" />
    <g clipPath="url(#pocket)">
      <ellipse cx="1286" cy="520" rx="132" ry="98.500" transform="rotate(-25 1286 520)" fill="#fe7fbd" stroke={EDGE} />
    </g>
    <ellipse cx="1279" cy="511" rx="141" ry="103" transform="rotate(-29 1279 511)" fill="none" stroke={EDGE} />
    {HOLES.map(([x, y, big], i) => (
      <ellipse key={i} cx={x} cy={y} rx={big ? 23.400 : 10.200} ry={big ? 17.200 : 7.600}
        transform={`rotate(-30 ${x} ${y})`} fill="url(#hole)" stroke={EDGE} strokeWidth="1.200" />
    ))}
    <polygon points="859,953 883,953 892,969 883,989 857,988 850,973" fill="#aeaeae" />
    <path d="M859 951L875 982" stroke="#9fb0d8" strokeWidth="3" strokeDasharray="6 3" />
    <text x="871" y="986" fontFamily="Liberation Sans" fontSize="11" fill="#9fb0d8">Z</text>
    <path d="M859 950L842 985" stroke="#3aa83a" strokeWidth="3" />
    <path d="M846 975l-5 12 8-8z" fill="#3aa83a" />
    <text x="835" y="997" fontFamily="Liberation Sans" fontSize="12" fill="#3aa83a">Y</text>
    <path d="M860 950L890 953" stroke="#c8222a" strokeWidth="3" />
    <path d="M886 950l12 4-12 3z" fill="#c8222a" />
    <text x="898" y="960" fontFamily="Liberation Sans" fontSize="12" fill="#c8222a">X</text>
    <circle cx="859" cy="950" r="4" fill="#f2f2f2" />
  </svg>
);

/* ---------- watermark ---------- */
const Watermark = styled.div`
  position: absolute; left: 1616px; top: 975px; width: 304px; height: 100px; z-index: 8;
  display: flex; pointer-events: none;
`;
const WmText = styled.div`
  margin-left: 6px; display: flex; flex-direction: column; opacity: .92;
`;
const WmBig = styled.div`
  font: 900 47px/52px "Noto Sans CJK SC", sans-serif; color: #4aa5d8; white-space: nowrap; padding-top: 12px; letter-spacing: -.5px;
  -webkit-text-stroke: 3px rgba(255, 255, 255, .75); paint-order: stroke fill;
`;
const WmSmall = styled.div`
  font: 700 18px/16px "Liberation Sans", sans-serif; color: #3d93cd; letter-spacing: 2.500px; white-space: nowrap; margin-top: 3px;
  -webkit-text-stroke: 2px rgba(255, 255, 255, .8); paint-order: stroke fill;
`;
const WmLogo = () => (
  <S w={90} h={100} vb="0 0 92 100">
    <path d="M46 2l44 25v47L46 98 2 74V27z" fill="#2f6fa8" fillOpacity=".72" stroke="#d8e4ec" strokeOpacity=".8" strokeWidth="3" />
    <path d="M46 2l44 25v47L46 98c18-16 26-60 0-96z" fill="#38a0d0" fillOpacity=".5" />
    <path d="M46 28l25 14v28L46 84 22 70V42z" fill="#7fa8d8" fillOpacity=".55" stroke="#dfe8ee" strokeOpacity=".9" strokeWidth="4" />
    <path d="M22 42l24 14 25-14M46 56v28" stroke="#e8f0f4" strokeOpacity=".8" strokeWidth="1.500" fill="none" />
    <path d="M46 56l25-14v28L46 84z" fill="#6ec8f0" fillOpacity=".55" />
  </S>
);

export default function App() {
  return (
    <Screen>
      <Global />
      <TitleBar>
        <Placed items={quick} />
        <TitleText>NX 11 - 建模 - [UG双头螺旋刀路.prt（ 修改的 ）]</TitleText>
        <RightGroup $w={152}><Placed start={1768} items={titleRight} /></RightGroup>
      </TitleBar>
      <MenuBar>
        <FileTab>文件(F)</FileTab>
        <Tabs>
          {['主页', '装配', '曲线', '曲面', '视图', '分析'].map(t => <Tab key={t}>{t}</Tab>)}
          <Tab $on>渲染</Tab>
          {['应用模块', '电极设计', '工具', '进玉电极 V8.2'].map(t => <Tab key={t}>{t}</Tab>)}
        </Tabs>
        <RightGroup $w={276}><Placed start={1644} items={menuRight} /></RightGroup>
      </MenuBar>
      <Ribbon><Caret $s={3.500} /></Ribbon>
      <ToolBar>
        <Placed items={tools} />
        <ToolEnd><Caret /></ToolEnd>
      </ToolBar>
      <Workspace>
        <Panel>
          <Gutter />
          <PanelBody>
            <PanelHead><MaxBtn /></PanelHead>
            <List>
              <ListHead />
              {Array.from({ length: 36 }, (_, i) => <ListRow key={i} $alt={i % 2 === 1} />)}
            </List>
            <ListEnd />
            <Section>相依性<Chev /></Section>
            <Section>细节<Chev /></Section>
            <Section>预览<Chev /></Section>
          </PanelBody>
        </Panel>
        <Viewport><Part /></Viewport>
      </Workspace>
      <StatusBar>选择对象并使用 MB3，或者双击某一对象</StatusBar>
      <Taskbar><Placed items={task} /></Taskbar>

      <MainMenu>
        <MainCol>
          <MainItems>
            {mainMenu.map((m, i) => m.sep ? <MenuSep key={i} /> : (
              <Item key={i} $on={m.on}>
                <ItemIcon>{m.i}</ItemIcon>
                <ItemLabel>{m.l}(<u>{m.k}</u>){m.d}</ItemLabel>
                {m.s && <Shortcut>{m.s}</Shortcut>}
                <ItemArrow>{m.a && <ArrowR />}</ItemArrow>
              </Item>
            ))}
          </MainItems>
          <MainFoot />
        </MainCol>
      </MainMenu>

      <SubMenu>
        {subMenu.map((m, i) => m.sep ? <SubSep key={i} /> : (
          <SubItem key={i} $on={m.on}>
            <SubIcon>{m.f && <><SubFmt>{m.f}</SubFmt><SubTri /></>}</SubIcon>
            <SubText><SubTitle>{m.t}</SubTitle><SubDesc>{m.d}</SubDesc></SubText>
          </SubItem>
        ))}
        <SubFoot><Caret $s={3} /></SubFoot>
      </SubMenu>

      <Watermark>
        <WmLogo />
        <WmText>
          <WmBig>3D世界网</WmBig>
          <WmSmall>WWW.3DSJW.COM</WmSmall>
        </WmText>
      </Watermark>
    </Screen>
  );
}
